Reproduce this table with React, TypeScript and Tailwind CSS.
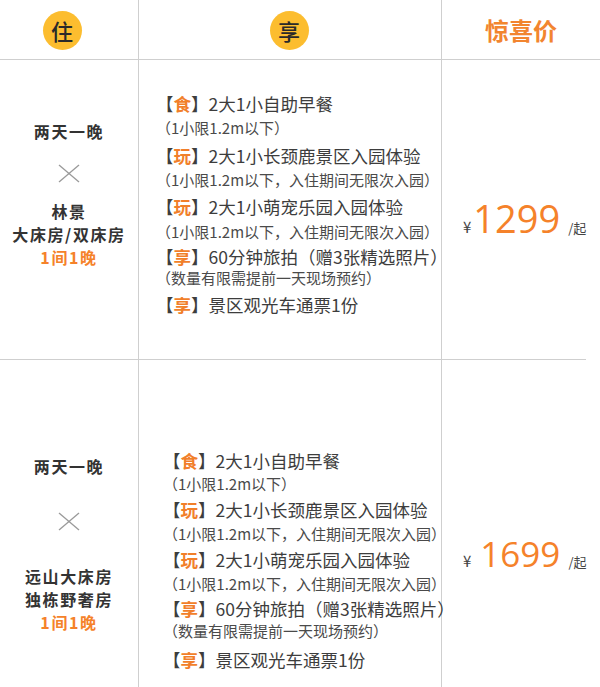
const FONT = "font-['Noto_Sans_CJK_SC','Noto_Sans',sans-serif]";

type Line = { kind: "main" | "sub"; tag?: string; text: string; mt: string };

const row1: Line[] = [
  { kind: "main", tag: "食", text: "2大1小自助早餐", mt: "mt-0" },
  { kind: "sub", text: "（1小限1.2m以下）", mt: "mt-0" },
  { kind: "main", tag: "玩", text: "2大1小长颈鹿景区入园体验", mt: "mt-[4px]" },
  { kind: "sub", text: "（1小限1.2m以下，入住期间无限次入园）", mt: "mt-0" },
  { kind: "main", tag: "玩", text: "2大1小萌宠乐园入园体验", mt: "mt-[3px]" },
  { kind: "sub", text: "（1小限1.2m以下，入住期间无限次入园）", mt: "mt-[1px]" },
  { kind: "main", tag: "享", text: "60分钟旅拍（赠3张精选照片）", mt: "mt-[1px]" },
  { kind: "sub", text: "（数量有限需提前一天现场预约）", mt: "-mt-[3px]" },
  { kind: "main", tag: "享", text: "景区观光车通票1份", mt: "mt-[3px]" },
];

const row2: Line[] = [
  { kind: "main", tag: "食", text: "2大1小自助早餐", mt: "mt-0" },
  { kind: "sub", text: "（1小限1.2m以下）", mt: "-mt-[1px]" },
  { kind: "main", tag: "玩", text: "2大1小长颈鹿景区入园体验", mt: "mt-[2px]" },
  { kind: "sub", text: "（1小限1.2m以下，入住期间无限次入园）", mt: "mt-0" },
  { kind: "main", tag: "玩", text: "2大1小萌宠乐园入园体验", mt: "mt-[2px]" },
  { kind: "sub", text: "（1小限1.2m以下，入住期间无限次入园）", mt: "mt-0" },
  { kind: "main", tag: "享", text: "60分钟旅拍（赠3张精选照片）", mt: "mt-[1px]" },
  { kind: "sub", text: "（数量有限需提前一天现场预约）", mt: "-mt-[2px]" },
  { kind: "main", tag: "享", text: "景区观光车通票1份", mt: "mt-[5px]" },
];

function Cross() {
  return (
    <svg width="24" height="19" viewBox="0 0 24 19" className="block">
      <line x1="2" y1="1" x2="22" y2="18" stroke="#9a9a9a" strokeWidth="1.3" />
      <line x1="22" y1="1" x2="2" y2="18" stroke="#9a9a9a" strokeWidth="1.3" />
    </svg>
  );
}

function Circle({ ch }: { ch: string }) {
  return (
    <div className="w-[39px] h-[39px] rounded-full bg-[#fcbd2f] flex items-center justify-center text-[22px] font-medium text-[#2a2a2a]">
      {ch}
    </div>
  );
}

function Perks({ lines }: { lines: Line[] }) {
  return (
    <div className="flex flex-col">
      {lines.map((l, i) =>
        l.kind === "main" ? (
          <div key={i} className={`${l.mt} h-6 leading-6 text-[17.5px] text-[#3d3d3d] whitespace-nowrap`}>
            【<span className="text-[#f17f2a] font-bold">{l.tag}</span>】{l.text}
          </div>
        ) : (
          <div key={i} className={`${l.mt} h-6 leading-6 text-[15px] text-[#4a4a4a] whitespace-nowrap`}>
            {l.text}
          </div>
        )
      )}
    </div>
  );
}

function Price({ value, gap, size }: { value: string; gap: string; size: string }) {
  return (
    <div className="flex items-baseline">
      <span className="text-[15px] text-[#444]">¥</span>
      <span className={`${gap} ${size} leading-none text-[#f5822a] font-['Open_Sans',sans-serif]`}>{value}</span>
      <span className="ml-[8px] text-[13px] text-[#444]">/起</span>
    </div>
  );
}

export default function App() {
  return (
    <div className={`${FONT} w-[600px] h-[687px] overflow-hidden bg-white`}>
      {/* Header */}
      <div className="grid grid-cols-[139px_303px_158px] h-[60px] border-b border-[#cfcfcf]">
        <div className="border-r border-[#cfcfcf] flex items-center justify-center pr-[14px] pt-[2px]">
          <Circle ch="住" />
        </div>
        <div className="border-r border-[#cfcfcf] flex items-center justify-center pt-[2px] pr-[2px]">
          <Circle ch="享" />
        </div>
        <div className="flex items-center justify-center text-[24px] font-bold text-[#f2852f]">
          惊喜价
        </div>
      </div>

      {/* Row 1 */}
      <div className="grid grid-cols-[139px_303px_158px] h-[300px] border-b border-[#cfcfcf] mr-[14px]">
        <div className="border-r border-[#cfcfcf] flex flex-col items-center pt-[60px] text-[16px] tracking-[1.6px] font-bold text-[#333] leading-[23px]">
          <div>两天一晚</div>
          <div className="mt-[21px]"><Cross /></div>
          <div className="mt-[17px]">林景</div>
          <div>大床房/双床房</div>
          <div className="text-[#f5822a]">1间1晚</div>
        </div>
        <div className="border-r border-[#cfcfcf] pt-[32px] pl-[17px]">
          <Perks lines={row1} />
        </div>
        <div className="pt-[139px] pl-[21px]">
          <Price value="1299" gap="ml-[2px]" size="text-[38px]" />
        </div>
      </div>

      {/* Row 2 */}
      <div className="grid grid-cols-[139px_303px_158px] h-[340px]">
        <div className="border-r border-[#cfcfcf] flex flex-col items-center pt-[95px] text-[16px] tracking-[1.6px] font-bold text-[#333] leading-[23px]">
          <div>两天一晚</div>
          <div className="mt-[34px]"><Cross /></div>
          <div className="mt-[34px]">远山大床房</div>
          <div>独栋野奢房</div>
          <div className="text-[#f5822a]">1间1晚</div>
        </div>
        <div className="border-r border-[#cfcfcf] pt-[89px] pl-[24px]">
          <Perks lines={row2} />
        </div>
        <div className="pt-[176px] pl-[21px]">
          <Price value="1699" gap="ml-[9px]" size="text-[35px]" />
        </div>
      </div>
    </div>
  );
}
